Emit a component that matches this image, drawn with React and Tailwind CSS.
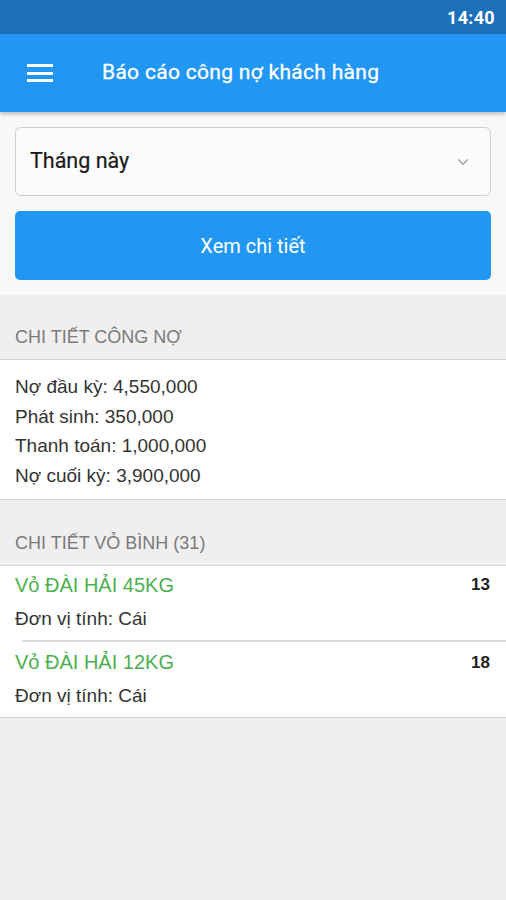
import React from 'react';
import { ChevronDown } from 'lucide-react';

const debtRows = [
  'Nợ đầu kỳ: 4,550,000',
  'Phát sinh: 350,000',
  'Thanh toán: 1,000,000',
  'Nợ cuối kỳ: 3,900,000',
];

const shells = [
  { name: 'Vỏ ĐÀI HẢI 45KG', qty: 13, unit: 'Cái' },
  { name: 'Vỏ ĐÀI HẢI 12KG', qty: 18, unit: 'Cái' },
];

const App = () => {
  return (
    <div className="w-full min-h-[900px] bg-[#efefef] font-['Liberation_Sans',Arial,sans-serif]">
      {/* Status bar */}
      <div className="h-[34px] bg-[#1b70b9] flex items-center justify-end pr-[11px]">
        <span className="text-white text-[18px] font-bold font-['Roboto',sans-serif] tracking-[0.3px]">14:40</span>
      </div>

      {/* App bar */}
      <div className="h-[78px] bg-[#2196f3] flex items-center shadow-[0_2px_4px_rgba(0,0,0,0.25)] relative z-10">
        <div className="w-[102px] pl-[27px] flex flex-col gap-[4.5px]">
          <span className="block w-[26px] h-[3px] bg-white"></span>
          <span className="block w-[26px] h-[3px] bg-white"></span>
          <span className="block w-[26px] h-[3px] bg-white"></span>
        </div>
        <span className="text-white text-[21px] font-['Roboto',sans-serif] tracking-[0.3px] [-webkit-text-stroke:0.3px_white]">
          Báo cáo công nợ khách hàng
        </span>
      </div>

      {/* Filter panel */}
      <div className="bg-[#f8f8f8] px-[15px] pt-[15px] pb-[15px] flex flex-col gap-[15px]">
        <div className="h-[69px] bg-[#fbfbfb] border border-[#cfcfcf] rounded-[6px] flex items-center justify-between pl-[14px] pr-[18px]">
          <span className="text-[21.5px] text-[#1a1a1a] font-['Roboto',sans-serif] [-webkit-text-stroke:0.2px_#1a1a1a]">Tháng này</span>
          <ChevronDown size={18} className="text-[#999]" strokeWidth={1.5} />
        </div>
        <button className="h-[69px] w-full bg-[#2196f3] rounded-[5px] text-white text-[20px] font-['Roboto',sans-serif]">
          Xem chi tiết
        </button>
      </div>

      {/* Debt detail */}
      <div className="h-[65px] flex items-end pb-[8px] px-[15px] border-b border-[#d4d4d4]">
        <span className="text-[18px] text-[#7a7a7a]">CHI TIẾT CÔNG NỢ</span>
      </div>
      <div className="bg-white px-[15px] pt-[12px] pb-[9px] border-b border-[#d4d4d4] flex flex-col">
        {debtRows.map((row) => (
          <span key={row} className="text-[19px] text-[#333] leading-[29.5px]">{row}</span>
        ))}
      </div>

      {/* Shell detail */}
      <div className="h-[66px] flex items-end pb-[8px] px-[15px] border-b border-[#d4d4d4]">
        <span className="text-[18px] text-[#7a7a7a]">CHI TIẾT VỎ BÌNH (31)</span>
      </div>
      <div className="bg-white border-b border-[#d4d4d4]">
        {shells.map((s, i) => (
          <div key={s.name}>
            {i > 0 && <div className="ml-[22px] h-[2px] bg-[#dcdcdc]"></div>}
            <div className={'flex flex-col pl-[15px] pr-[16px] pb-[9px] ' + (i === 0 ? 'pt-[6px]' : 'pt-[8px]')}>
              <div className="flex justify-between items-center">
                <span className="text-[20px] text-[#4caf50] leading-[24px]">{s.name}</span>
                <span className="text-[17px] font-bold text-[#222]">{s.qty}</span>
              </div>
              <span className="text-[19px] text-[#333] mt-[9px] leading-[24px]">Đơn vị tính: {s.unit}</span>
            </div>
          </div>
        ))}
      </div>
    </div>
  );
};

export default App;
